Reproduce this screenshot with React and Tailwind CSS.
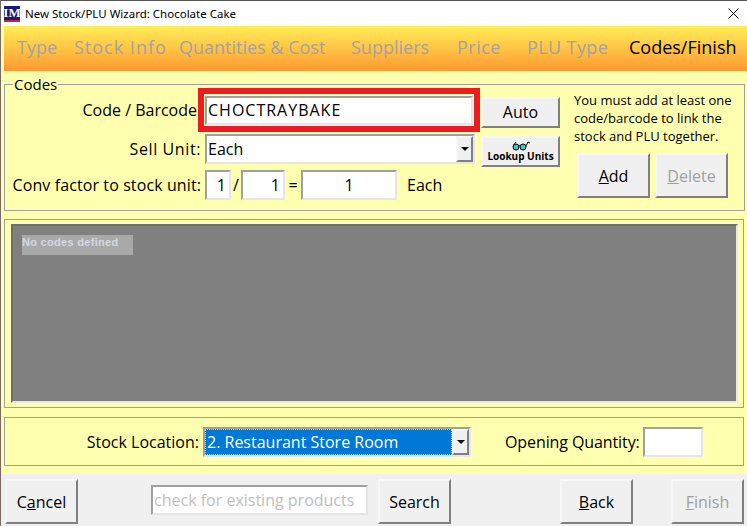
const comic = "font-['Open_Sans','Noto_Sans',sans-serif]";
const raised = "border-2 border-t-[#f7f7f7] border-l-[#f7f7f7] border-r-[#808080] border-b-[#808080] bg-[#f0f0f0]";
const sunken = "border-2 border-t-[#a0a0a0] border-l-[#a0a0a0] border-r-[#e6e6e6] border-b-[#e6e6e6] bg-white";

function Tab({ children, active, className = "" }) {
  return (
    <span className={`text-[18px] ${active ? "text-black" : "text-[#a3a3a3]"} ${className}`}>
      {children}
    </span>
  );
}

function Btn({ children, className = "", disabled }) {
  return (
    <button className={`${raised} flex items-center justify-center text-[16px] ${disabled ? "text-[#a0a0a0]" : "text-black"} ${className}`}>
      {children}
    </button>
  );
}

function Arrow() {
  return (
    <span className={`${raised} flex items-center justify-center w-[17px] h-full`}>
      <span className="w-0 h-0 border-x-[4px] border-x-transparent border-t-[4px] border-t-black" />
    </span>
  );
}

function Glasses() {
  return (
    <svg width="18" height="10" viewBox="0 0 18 10" className="block">
      <circle cx="4" cy="6" r="3" fill="#3fc7c7" stroke="#000" strokeWidth="1" />
      <circle cx="11" cy="6" r="3" fill="#3fc7c7" stroke="#000" strokeWidth="1" />
      <path d="M7 5 Q7.5 4 8 5 M1 5 L4 1 M14 5 L16 1 L18 2" fill="none" stroke="#000" strokeWidth="1" />
    </svg>
  );
}

export default function App() {
  return (
    <div className={`w-[747px] h-[526px] overflow-hidden flex flex-col border-l border-[#7a6a66] bg-[#ffffb0] ${comic}`}>
      {/* title bar */}
      <div className="h-[26px] shrink-0 bg-white border-t border-[#555] flex items-center pl-[3px] pr-[6px] font-['Noto_Sans',sans-serif] text-[11.5px] text-black">
        <div className="w-4 h-4 bg-[#1a1a7a] mr-[5px] flex flex-col items-center justify-between overflow-hidden">
          <span className="text-white text-[13px] leading-[13px] font-bold font-['Liberation_Serif',serif]">IM</span>
          <span className="w-full h-[2px] bg-[#d02030]" />
        </div>
        <span>New Stock/PLU Wizard: Chocolate Cake</span>
        <svg width="11" height="11" viewBox="0 0 11 11" className="ml-auto mr-[2px]">
          <path d="M0.5 0.5 L10.5 10.5 M10.5 0.5 L0.5 10.5" stroke="#000" strokeWidth="1" />
        </svg>
      </div>

      {/* wizard steps */}
      <div className="h-[45px] shrink-0 ml-[3px] bg-gradient-to-b from-[#ffee58] to-[#ff9830] flex items-center pl-[13px] pb-[3px] whitespace-nowrap">
        <Tab className="w-[57px]">Type</Tab>
        <Tab className="w-[105px] tracking-[1px]">Stock Info</Tab>
        <Tab className="w-[172px]">Quantities &amp; Cost</Tab>
        <Tab className="w-[106px]">Suppliers</Tab>
        <Tab className="w-[70px] tracking-[0.5px]">Price</Tab>
        <Tab className="w-[102px] tracking-[0.4px]">PLU Type</Tab>
        <Tab active>Codes/Finish</Tab>
      </div>

      {/* codes group */}
      <fieldset className="mt-[4px] ml-[3px] mr-[2px] h-[136px] border border-[#a0a0a0] flex text-black text-[16px]">
        <legend className="ml-[8px] px-[1px] text-[15px] leading-[18px]">Codes</legend>
        <div className="w-[556px] shrink-0 pt-[2px] flex flex-col">
          <div className="flex items-center h-[30px]">
            <span className="w-[192px] text-right">Code / Barcode</span>
            <div className="relative ml-[8px] w-[268px] h-[29px]">
              <div className={`${sunken} w-full h-full flex items-center px-[1px] text-[16px] tracking-[1px]`}>CHOCTRAYBAKE</div>
              <div className="absolute -left-[7px] -right-[7px] -top-[8px] -bottom-[7px] border-[6px] border-[#ed1c24]" />
            </div>
            <Btn className="ml-[8px] w-[79px] h-[31px] mt-[4px]">Auto</Btn>
          </div>
          <div className="flex items-start h-[31px] mt-[9px]">
            <span className="w-[196px] text-right tracking-[0.6px] leading-[30px]">Sell Unit:</span>
            <div className={`${sunken} ml-[4px] w-[270px] h-[30px] flex items-center pl-[1px] text-[16px]`}>
              <span className="flex-1">Each</span>
              <Arrow />
            </div>
            <Btn className="ml-[6px] mt-[2px] w-[79px] h-[31px] flex-col !text-[10px] font-bold leading-[11px]">
              <Glasses />
              <span>Lookup Units</span>
            </Btn>
          </div>
          <div className="flex items-center h-[30px] mt-[5px]">
            <span className="w-[196px] text-right whitespace-nowrap tracking-[0.1px]">Conv factor to stock unit:</span>
            <div className={`${sunken} ml-[4px] w-[26px] h-[30px] flex items-center justify-end pr-[3px]`}>1</div>
            <span className="w-[10px] text-center">/</span>
            <div className={`${sunken} w-[44px] h-[30px] flex items-center justify-end pr-[3px]`}>1</div>
            <span className="w-[16px] text-center">=</span>
            <div className={`${sunken} w-[96px] h-[30px] flex items-center justify-center`}>1</div>
            <span className="ml-[10px]">Each</span>
          </div>
        </div>
        <div className="ml-[13px] flex flex-col">
          <p className="text-[13px] leading-[18px] whitespace-nowrap -mt-[2px]">
            You must add at least one<br />code/barcode to link the<br />stock and PLU together.
          </p>
          <div className="flex gap-[5px] ml-[3px] mt-[8px]">
            <Btn className="w-[73px] h-[45px]"><span><u>A</u>dd</span></Btn>
            <Btn className="w-[73px] h-[45px]" disabled><span><u>D</u>elete</span></Btn>
          </div>
        </div>
      </fieldset>

      {/* codes list */}
      <div className="mt-[8px] ml-[3px] mr-[3px] h-[189px] border border-[#a0a0a0] p-[4px] pl-[6px] pr-[5px] shrink-0">
        <div className="h-full bg-[#808080] border-2 border-t-[#6e6e6e] border-l-[#6e6e6e] border-r-[#e8e8e8] border-b-[#e8e8e8] p-[9px]">
          <div className="w-[111px] h-[20px] bg-[#a9a9a9] text-[#d3d8e0] text-[11px] font-bold leading-[14px] tracking-[0.3px] font-['Liberation_Sans',sans-serif]">
            No codes defined
          </div>
        </div>
      </div>

      {/* stock location */}
      <div className="mt-[9px] ml-[3px] mr-[3px] h-[49px] shrink-0 border border-[#a0a0a0] flex items-center text-black text-[16px]">
        <span className="w-[194px] text-right">Stock Location:</span>
        <div className={`${sunken} ml-[4px] w-[268px] h-[30px] flex items-center`}>
          <span className="flex-1 h-full bg-[#0078d7] text-white border border-dotted border-[#f0d080] pl-[1px] leading-[24px]">2. Restaurant Store Room</span>
          <Arrow />
        </div>
        <span className="ml-[34px] w-[134px] whitespace-nowrap tracking-[-0.1px]">Opening Quantity:</span>
        <div className={`${sunken} ml-[4px] w-[60px] h-[30px]`} />
      </div>

      {/* footer buttons */}
      <div className="mt-[8px] flex-1 bg-[#f0f0f0] flex items-start pt-[5px] pl-[4px] text-[16px]">
        <Btn className="w-[73px] h-[45px]"><span>C<u>a</u>ncel</span></Btn>
        <div className={`${sunken} ml-[73px] mt-[6px] w-[217px] h-[30px] flex items-center pl-[1px] text-[#c0c0c0] whitespace-nowrap`}>check for existing products</div>
        <Btn className="ml-[10px] w-[73px] h-[45px]">Search</Btn>
        <Btn className="ml-[109px] w-[73px] h-[45px]"><span><u>B</u>ack</span></Btn>
        <Btn className="ml-[38px] w-[73px] h-[45px]" disabled><span><u>F</u>inish</span></Btn>
      </div>
    </div>
  );
}
